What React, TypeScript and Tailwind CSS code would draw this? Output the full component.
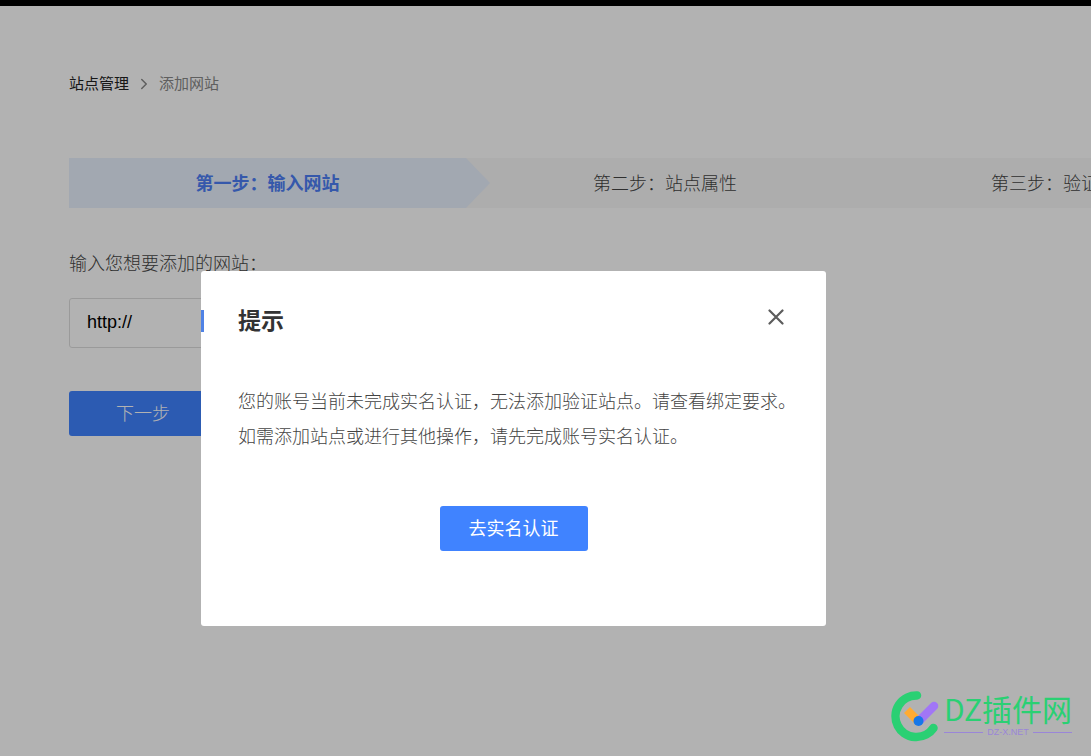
import { ChevronRight } from 'lucide-react';

const steps = ['第一步：输入网站', '第二步：站点属性', '第三步：验证网站'];

function Breadcrumb() {
  return (
    <nav className="flex items-center text-[15px] leading-6">
      <a href="#sites" className="text-[#222222]">站点管理</a>
      <ChevronRight className="mx-[6px] size-[18px] text-[#888888]" strokeWidth={2} />
      <span className="text-[#888888]">添加网站</span>
    </nav>
  );
}

function Steps() {
  return (
    <ol className="mt-[61px] flex overflow-hidden bg-[#f8f8f8] text-lg">
      {steps.map((step, index) => (
        <li
          key={step}
          className={
            index === 0
              ? 'relative flex h-[50px] w-[397px] shrink-0 items-center justify-center bg-[#e9f1fe] pt-px font-bold text-[#4d7ff5]'
              : 'flex h-[50px] w-[398px] shrink-0 items-center justify-center pt-px font-light text-[#444444]'
          }
        >
          {step}
          {index === 0 && (
            <svg className="absolute top-0 left-full h-full w-6" viewBox="0 0 24 50" aria-hidden="true">
              <path d="M0 0L24 25L0 50Z" fill="#e9f1fe" />
            </svg>
          )}
        </li>
      ))}
    </ol>
  );
}

function SiteForm() {
  return (
    <form className="mt-[42px] pr-[69px]" onSubmit={(e) => e.preventDefault()}>
      <label htmlFor="site" className="block text-lg leading-7 font-light text-[#444444]">
        输入您想要添加的网站：
      </label>
      <input
        id="site"
        type="text"
        defaultValue="http://"
        className="mt-5 block h-[50px] w-full max-w-[600px] rounded-[3px] border border-[#dddddd] bg-white px-[17px] pb-px text-lg text-black outline-none"
      />
      <button type="submit" className="mt-[43px] h-[45px] rounded-[3px] bg-[#4083ff] px-[47px] text-lg font-light text-white">
        下一步
      </button>
    </form>
  );
}

function NoticeDialog() {
  return (
    <div
      role="dialog"
      aria-modal="true"
      aria-labelledby="notice-title"
      className="w-full max-w-[625px] rounded-[3px] bg-white pt-[34px] pb-[75px]"
    >
      <div className="flex items-start justify-between pr-[38px]">
        <h2
          id="notice-title"
          className="flex items-center gap-[34px] text-[23px] leading-8 font-bold text-[#333333]"
        >
          <span className="h-[22px] w-[3px] bg-[#4f82e6]" />
          提示
        </h2>
        <button type="button" aria-label="关闭" className="flex size-6 items-center justify-center">
          <svg className="size-4" viewBox="0 0 16 16" fill="none" stroke="#5c5c5c" strokeWidth="2.2" strokeLinecap="round">
            <path d="M1.5 1.5L14.5 14.5M14.5 1.5L1.5 14.5" />
          </svg>
        </button>
      </div>
      <p className="mt-12 pl-[37px] text-lg leading-[35px] font-light text-[#444444]">
        您的账号当前未完成实名认证，无法添加验证站点。请查看绑定要求。
        <br />
        如需添加站点或进行其他操作，请先完成账号实名认证。
      </p>
      <div className="mt-[51px] flex justify-center">
        <button type="button" className="h-[45px] rounded-[3px] bg-[#4083ff] px-[29px] text-lg text-white">
          去实名认证
        </button>
      </div>
    </div>
  );
}

function Watermark() {
  return (
    <div className="absolute right-[19px] bottom-[14px] flex items-center gap-1">
      <svg className="h-[52px] w-[49px]" viewBox="0 0 49 52" fill="none" strokeLinecap="round" aria-hidden="true">
        <path d="M26 5.5A20.8 20.8 0 1 0 42.5 38" stroke="#2ad073" strokeWidth="8.5" />
        <path d="M16 20L27 31" stroke="#ffab32" strokeWidth="8.5" strokeLinecap="butt" />
        <path d="M28 31L43 16" stroke="#a176f5" strokeWidth="8.5" />
        <circle cx="27.5" cy="31" r="5" fill="#1677e8" />
      </svg>
      <div className="flex flex-col gap-1">
        <span className="font-['Noto_Sans_CJK_SC',sans-serif] text-[30px] leading-7 text-[#2ad073]">DZ插件网</span>
        <span className="flex items-center gap-1 text-[9px] leading-3 text-[#9a86d8]">
          <span className="h-px flex-1 bg-[#9a86d8]" />
          DZ-X.NET
          <span className="h-px flex-1 bg-[#9a86d8]" />
        </span>
      </div>
    </div>
  );
}

export default function App() {
  return (
    <div className="relative min-h-screen overflow-hidden border-t-[6px] border-black bg-white font-['Liberation_Sans','Noto_Sans_CJK_SC',sans-serif]">
      <main className="pt-[66px] pl-[69px]">
        <Breadcrumb />
        <div className="pt-px">
          <Steps />
        </div>
        <SiteForm />
      </main>
      <div className="absolute inset-0 bg-black/30 pt-[265px] pl-[201px]">
        <NoticeDialog />
      </div>
      <Watermark />
    </div>
  );
}
